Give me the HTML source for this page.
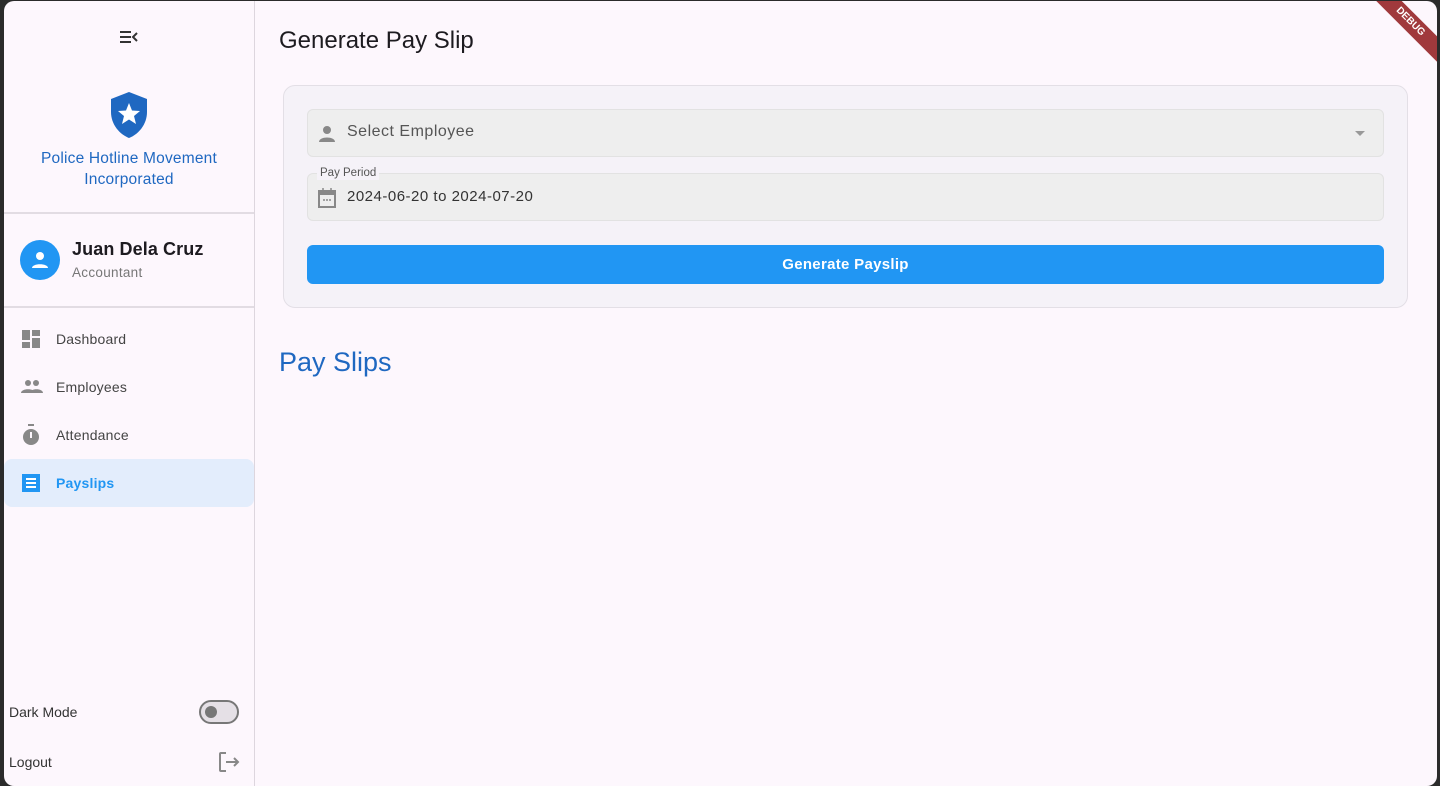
<!DOCTYPE html>
<html><head><style>
*{box-sizing:border-box;margin:0;padding:0}
body{width:1440px;height:786px;background:#2b2b2b;font-family:"Liberation Sans",sans-serif;position:relative;overflow:hidden}
.win{position:absolute;left:4px;top:1px;width:1433px;height:785px;background:#fdf7fd;border-radius:10px;overflow:hidden}
.side{position:absolute;left:0;top:0;width:251px;height:100%;border-right:1px solid #ddd6de}
.main{position:absolute;left:251px;top:0;right:0;bottom:0}
.hr{position:absolute;left:0;width:250px;height:2px;background:#e2dce3}
.nav{position:absolute;left:0;width:250px;height:48px;display:flex;align-items:center;font-size:14px;color:#444;letter-spacing:0.2px}
.nav svg{position:absolute;left:17px}
.nav span{position:absolute;left:52px}
.sel{background:#e3edfc;color:#2196f3;font-weight:bold;border-radius:8px}
.field{position:absolute;left:23px;width:1077px;height:48px;background:#eeeeee;border:1px solid #e2e2e2;border-radius:6px}
</style></head><body>
<div class="win">
 <div class="side">
  <svg style="position:absolute;left:115px;top:28px" width="20" height="16" viewBox="0 0 20 16"><path d="M1 3h11M1 8h11M1 13h11M18 4l-4 4 4 4" stroke="#333" stroke-width="2" fill="none"/></svg>
  <svg style="position:absolute;left:105px;top:90px" width="40" height="48" viewBox="0 0 40 48"><path d="M20 1L2 8v13c0 12 8 22 18 26 10-4 18-14 18-26V8z" fill="#1f68c1"/><path d="M20 12l3 7.5 8 .5-6 5 2 8-7-4.5-7 4.5 2-8-6-5 8-.5z" fill="#fff"/></svg>
  <div style="position:absolute;left:0;width:250px;top:147px;text-align:center;color:#1f68c1;font-size:15.5px;line-height:21px;letter-spacing:0.2px">Police Hotline Movement<br>Incorporated</div>
  <div class="hr" style="top:211px"></div>
  <div style="position:absolute;left:16px;top:239px;width:40px;height:40px;border-radius:50%;background:#2196f3"><svg style="margin:11px" width="18" height="18" viewBox="0 0 18 18"><circle cx="9" cy="5" r="4" fill="#fff"/><path d="M1 17c0-5 16-5 16 0z" fill="#fff"/></svg></div>
  <div style="position:absolute;left:68px;top:238px;font-size:18px;color:#1d1b20;font-weight:bold;letter-spacing:0.1px">Juan Dela Cruz</div>
  <div style="position:absolute;left:68px;top:264px;font-size:13.5px;color:#777;letter-spacing:0.3px">Accountant</div>
  <div class="hr" style="top:305px"></div>
  <div class="nav" style="top:314px"><svg width="20" height="20" viewBox="0 0 20 20" fill="#888"><rect x="1" y="1" width="8" height="10"/><rect x="11" y="1" width="8" height="6"/><rect x="1" y="13" width="8" height="6"/><rect x="11" y="9" width="8" height="10"/></svg><span>Dashboard</span></div>
  <div class="nav" style="top:362px"><svg width="22" height="16" viewBox="0 0 22 16" fill="#888"><circle cx="7" cy="4" r="3"/><circle cx="15" cy="4" r="3"/><path d="M0 14c0-5 14-5 14 0zM9 14c0-5 13-5 13 0z"/></svg><span>Employees</span></div>
  <div class="nav" style="top:410px"><svg width="20" height="22" viewBox="0 0 20 22" fill="#888"><rect x="7" y="0" width="6" height="2"/><circle cx="10" cy="13" r="8"/><rect x="9" y="8" width="2" height="6" fill="#fdf7fd"/></svg><span>Attendance</span></div>
  <div class="nav sel" style="top:458px"><svg width="20" height="20" viewBox="0 0 20 20"><rect x="1" y="1" width="18" height="18" fill="#2196f3"/><path d="M5 6h10M5 10h10M5 14h10" stroke="#fff" stroke-width="2"/></svg><span>Payslips</span></div>
  <div style="position:absolute;left:5px;top:703px;font-size:14px;color:#333">Dark Mode</div>
  <div style="position:absolute;left:195px;top:699px;width:40px;height:24px;border-radius:12px;border:2px solid #777;background:#e5e0e6"><div style="width:12px;height:12px;border-radius:50%;background:#777;margin:4px 0 0 4px"></div></div>
  <div style="position:absolute;left:5px;top:753px;font-size:14px;color:#333">Logout</div>
  <svg style="position:absolute;left:214px;top:751px" width="22" height="20" viewBox="0 0 22 20"><path d="M8 1H3a1 1 0 0 0-1 1v16a1 1 0 0 0 1 1h5M8 10h12M16 6l4 4-4 4" stroke="#888" stroke-width="2" fill="none"/></svg>
 </div>
 <div class="main">
  <div style="position:absolute;left:24px;top:26px;font-size:24px;color:#1d1b20">Generate Pay Slip</div>
  <div style="position:absolute;left:28px;top:84px;width:1125px;height:223px;border:1px solid #e3dfe6;border-radius:12px;background:#f5f2f8">
   <div class="field" style="top:23px"><svg style="position:absolute;left:10px;top:15px" width="18" height="18" viewBox="0 0 18 18" fill="#888"><circle cx="9" cy="5" r="4"/><path d="M1 17c0-6 16-6 16 0z"/></svg><div style="position:absolute;left:39px;top:13px;font-size:16px;color:#555;letter-spacing:0.5px">Select Employee</div><div style="position:absolute;right:18px;top:21px;border:5px solid transparent;border-top-color:#999"></div></div>
   <div class="field" style="top:87px"><div style="position:absolute;left:9px;top:-8px;font-size:11.5px;color:#555;background:#f5f2f8;padding:0 3px;line-height:14px">Pay Period</div><svg style="position:absolute;left:10px;top:14px" width="18" height="20" viewBox="0 0 18 20"><rect x="1" y="3" width="16" height="16" fill="none" stroke="#888" stroke-width="2"/><rect x="1" y="3" width="16" height="4" fill="#888"/><path d="M5 0v4M13 0v4M5 12h2M8 12h2M11 12h2" stroke="#888" stroke-width="1.5"/></svg><div style="position:absolute;left:39px;top:14px;font-size:15px;color:#333;letter-spacing:0.5px">2024-06-20 to 2024-07-20</div></div>
   <div style="position:absolute;left:23px;top:159px;width:1077px;height:39px;background:#2196f3;border-radius:6px;color:#fff;font-weight:bold;font-size:15px;letter-spacing:0.3px;text-align:center;line-height:39px">Generate Payslip</div>
  </div>
  <div style="position:absolute;left:24px;top:346px;font-size:27px;color:#1f68c1">Pay Slips</div>
 </div>
 <div style="position:absolute;right:-28px;top:12px;width:110px;height:18px;background:#a0393c;transform:rotate(45deg);color:#fff;font-size:10px;font-weight:bold;text-align:center;line-height:18px">DEBUG</div>
</div>
</body></html>
